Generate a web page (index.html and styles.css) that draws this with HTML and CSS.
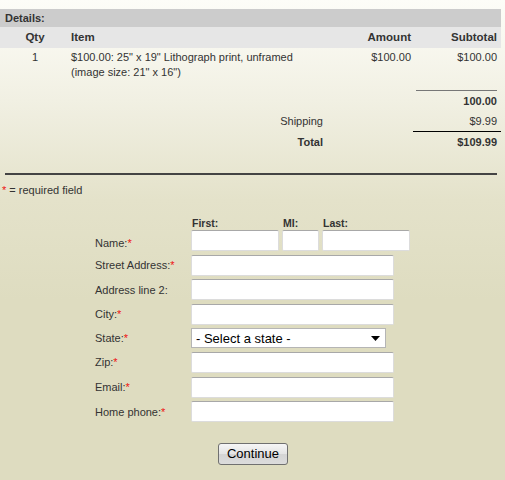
FILE: index.html
```html
<!DOCTYPE html>
<html lang="en">
<head>
  <meta charset="UTF-8">
  <title>Checkout</title>
  <link rel="stylesheet" href="styles.css">
</head>
<body>
  <div class="page">
    <!-- Order details -->
    <table class="details">
      <colgroup>
        <col class="c-qty">
        <col class="c-item">
        <col class="c-amount">
        <col class="c-sub">
      </colgroup>
      <tr class="caption">
        <td colspan="4">Details:</td>
      </tr>
      <tr class="head">
        <th class="qty">Qty</th>
        <th class="item">Item</th>
        <th class="num">Amount</th>
        <th class="num">Subtotal</th>
      </tr>
      <tr class="line-item">
        <td class="qty">1</td>
        <td class="item">$100.00: 25" x 19" Lithograph print, unframed<br>(image size: 21" x 16")</td>
        <td class="num">$100.00</td>
        <td class="num">$100.00</td>
      </tr>
      <tr class="sum-row">
        <td></td>
        <td></td>
        <td></td>
        <td class="num"><div class="rule-top">100.00</div></td>
      </tr>
      <tr class="ship-row">
        <td></td>
        <td class="label">Shipping</td>
        <td></td>
        <td class="num"><div class="rule-bottom">$9.99</div></td>
      </tr>
      <tr class="total-row">
        <td></td>
        <td class="label">Total</td>
        <td></td>
        <td class="num">$109.99</td>
      </tr>
    </table>

    <hr class="divider">

    <p class="note"><span class="req">*</span> = required field</p>

    <!-- Address form -->
    <form class="address" onsubmit="return false">
      <div class="row name-row">
        <label class="lbl">Name:<span class="req">*</span></label>
        <div class="name-parts">
          <div class="part first">
            <span class="part-lbl">First:</span>
            <input type="text">
          </div>
          <div class="part mi">
            <span class="part-lbl">MI:</span>
            <input type="text">
          </div>
          <div class="part last">
            <span class="part-lbl">Last:</span>
            <input type="text">
          </div>
        </div>
      </div>
      <div class="row">
        <label class="lbl">Street Address:<span class="req">*</span></label>
        <input type="text" class="field">
      </div>
      <div class="row">
        <label class="lbl">Address line 2:</label>
        <input type="text" class="field">
      </div>
      <div class="row">
        <label class="lbl">City:<span class="req">*</span></label>
        <input type="text" class="field">
      </div>
      <div class="row">
        <label class="lbl">State:<span class="req">*</span></label>
        <div class="select">
          <span>- Select a state -</span>
          <svg width="9" height="5" viewBox="0 0 9 5"><path d="M0 0h9L4.5 5z" fill="#000"/></svg>
        </div>
      </div>
      <div class="row">
        <label class="lbl">Zip:<span class="req">*</span></label>
        <input type="text" class="field">
      </div>
      <div class="row">
        <label class="lbl">Email:<span class="req">*</span></label>
        <input type="text" class="field">
      </div>
      <div class="row">
        <label class="lbl">Home phone:<span class="req">*</span></label>
        <input type="text" class="field">
      </div>
      <div class="actions">
        <button type="submit">Continue</button>
      </div>
    </form>
  </div>
</body>
</html>
```

FILE: styles.css
```css
html {
  background-color: #dedcc0;
  background-image: linear-gradient(to bottom, #fdfdf8 0, #f1f0e3 100px, #e4e2ca 200px, #dedcc0 300px);
  background-repeat: no-repeat;
  background-size: 100% 320px;
  min-height: 100%;
}

body {
  margin: 0;
  font-family: "Liberation Sans", Arial, sans-serif;
  font-size: 11px;
  color: #333;
}

.page {
  padding-top: 9px;
}

.details {
  width: 501px;
  border-collapse: collapse;
  table-layout: fixed;
}

.c-qty { width: 70px; }
.c-item { width: 260px; }
.c-amount { width: 85px; }
.c-sub { width: 86px; }

.details td,
.details th {
  padding: 0;
  line-height: 15px;
}

.caption td {
  background: #cccccc;
  font-weight: bold;
  height: 18px;
  padding-left: 5px;
}

.head th {
  background: #e6e6e6;
  font-weight: bold;
  height: 21px;
  font-size: 11.5px;
}

.qty {
  text-align: center;
}

.details .item {
  text-align: left;
  padding-left: 1px;
}

.details .num {
  text-align: right;
  padding-right: 4px;
}

.line-item td {
  vertical-align: top;
  padding-top: 2px;
  height: 40px;
}

.sum-row td {
  vertical-align: top;
}

.rule-top {
  border-top: 1px solid #777;
  margin-left: 1px;
  padding-top: 3px;
  padding-bottom: 1px;
  font-weight: bold;
}

.ship-row td {
  padding-top: 4px;
}

.rule-bottom {
  border-bottom: 1px solid #000;
  margin-left: -2px;
  margin-right: -4px;
  padding-right: 4px;
  padding-bottom: 2px;
}

.details .label {
  text-align: right;
  padding-right: 7px;
}

.ship-row .label {
  vertical-align: top;
}

.total-row td {
  height: 20px;
  font-weight: bold;
}

.divider {
  width: 492px;
  margin: 21px 0 0 5px;
  border: 0;
  border-top: 2px solid #444;
}

.note {
  margin: 9px 0 0 2px;
}

.req {
  color: #ee1111;
}

.address {
  margin-top: 22px;
  padding-left: 95px;
  display: flex;
  flex-direction: column;
  gap: 3.6px;
}

.row {
  display: flex;
  align-items: center;
}

.lbl {
  width: 96px;
  flex-shrink: 0;
}

.name-row {
  align-items: flex-end;
}

.name-row .lbl {
  padding-bottom: 2px;
}

.name-parts {
  display: flex;
  gap: 3px;
}

.part {
  display: flex;
  flex-direction: column;
}

.part-lbl {
  font-weight: bold;
  font-size: 10.5px;
  line-height: 11px;
  padding-left: 1px;
  margin-bottom: 1px;
}

input {
  box-sizing: border-box;
  height: 21px;
  background: #fff;
  border: 1px solid #dcdcdc;
  border-top-color: #a8a8a8;
  border-radius: 2px;
  margin: 0;
  padding: 2px;
  font-family: inherit;
}

.first input,
.last input {
  width: 88px;
}

.mi input {
  width: 37px;
}

.field {
  width: 203px;
}

.select {
  box-sizing: border-box;
  width: 195px;
  height: 20px;
  background: #fff;
  border: 1px solid #b5b5b5;
  display: flex;
  align-items: center;
  justify-content: space-between;
  padding: 0 5px 0 4px;
  font-size: 13px;
  color: #000;
}

.actions {
  margin-top: 17px;
  padding-left: 123px;
  display: flex;
}

button {
  width: 70px;
  height: 22px;
  font-family: inherit;
  font-size: 13px;
  color: #000;
  background: linear-gradient(to bottom, #f6f6f6 0, #e4e4e4 50%, #d4d4d4 51%, #dcdcdc 100%);
  border: 1px solid #707070;
  border-radius: 3px;
  padding: 0;
}
```
